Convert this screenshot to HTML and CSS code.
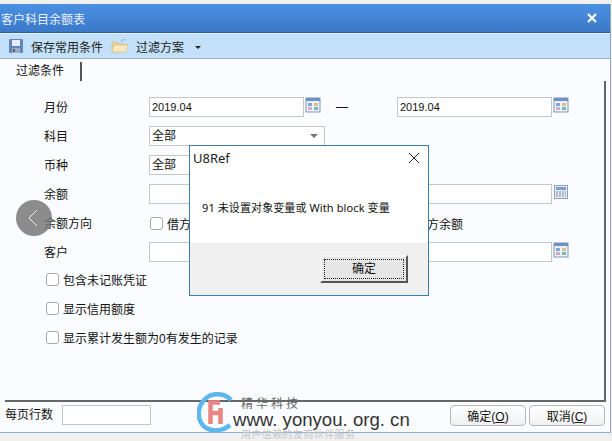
FILE: index.html
```html
<!DOCTYPE html>
<html lang="zh-CN">
<head>
    <meta charset="UTF-8">
    <title>客户科目余额表</title>
    <link rel="stylesheet" href="styles.css">
</head>
<body>
    <div class="window">
        <div class="titlebar">
            <span>客户科目余额表</span>
            <svg class="close-x" width="10" height="10" viewBox="0 0 10 10"><path d="M1 1 9 9M9 1 1 9" stroke="#fff" stroke-width="2.2"/></svg>
        </div>
        <div class="toolbar">
            <svg class="tool-icon" width="16" height="16" viewBox="0 0 16 16">
                <rect x="1" y="1" width="14" height="14" rx="1" fill="#6483bb"/>
                <rect x="4" y="2" width="8" height="6" fill="#e6edf8"/>
                <rect x="4" y="10" width="8" height="5" fill="#a3adc0"/>
                <rect x="5" y="11" width="2" height="3" fill="#4a5c84"/>
            </svg>
            <span class="tool-text">保存常用条件</span>
            <svg class="tool-icon folder" width="18" height="16" viewBox="0 0 18 16">
                <path d="M1 4h5l1 2h8v8H1z" fill="#e8d49a" stroke="#cdb680" stroke-width=".6"/>
                <path d="M3 7h14l-2 7H1z" fill="#f6e8bd" stroke="#d6be88" stroke-width=".6"/>
                <path d="M10 4c1-2 3-3 5-2" stroke="#a9bedb" stroke-width="1.4" fill="none"/>
            </svg>
            <span class="tool-text">过滤方案</span>
            <span class="caret"></span>
        </div>
        <div class="tab-strip">
            <span class="tab">过滤条件</span>
        </div>

        <div class="page">
            <div class="row">
                <label>月份</label>
                <div class="field date">2019.04</div>
                <svg class="cal" width="16" height="16" viewBox="0 0 16 16"><use href="#cal-icon"/></svg>
                <span class="dash">—</span>
                <div class="field date">2019.04</div>
                <svg class="cal" width="16" height="16" viewBox="0 0 16 16"><use href="#cal-icon"/></svg>
            </div>
            <div class="row">
                <label>科目</label>
                <div class="field field-select">全部<span class="select-arrow"></span></div>
            </div>
            <div class="row">
                <label>币种</label>
                <div class="field field-select">全部</div>
            </div>
            <div class="row">
                <label>余额</label>
                <div class="field"></div>
                <span class="cal-gap"></span>
                <span class="dash"></span>
                <div class="field"></div>
                <svg class="cal" width="16" height="16" viewBox="0 0 16 16">
                    <rect x="1.5" y="1.5" width="13" height="13" fill="#e4ebf3" stroke="#8fa3bd"/>
                    <rect x="3" y="3" width="10" height="3" fill="#7f9fd0"/>
                    <path d="M3 8h10M3 10h10M3 12h10" stroke="#7c8ea6" stroke-dasharray="2 1"/>
                </svg>
            </div>
            <div class="row">
                <label>余额方向</label>
                <div class="direction">
                    <span class="check"></span><span class="check-text">借方余额</span>
                </div>
                <span class="cal-gap"></span>
                <span class="dash"></span>
                <div class="direction">
                    <span class="check"></span><span class="check-text">贷方余额</span>
                </div>
            </div>
            <div class="row">
                <label>客户</label>
                <div class="field"></div>
                <span class="cal-gap"></span>
                <span class="dash"></span>
                <div class="field"></div>
                <svg class="cal" width="16" height="16" viewBox="0 0 16 16"><use href="#cal-icon"/></svg>
            </div>
            <div class="checks">
                <div class="check-row"><span class="check"></span>包含未记账凭证</div>
                <div class="check-row"><span class="check"></span>显示信用额度</div>
                <div class="check-row"><span class="check"></span>显示累计发生额为0有发生的记录</div>
            </div>
        </div>

        <div class="footer">
            <span class="page-label">每页行数</span>
            <div class="page-input"></div>
            <button class="btn btn-ok">确定(<u>O</u>)</button>
            <button class="btn">取消(<u>C</u>)</button>
        </div>
    </div>

    <div class="back-circle">
        <svg width="10" height="18" viewBox="0 0 10 18"><path d="M9 1 1 9l8 8" stroke="#f2f2f2" stroke-width="1" fill="none"/></svg>
    </div>

    <div class="dialog">
        <div class="dialog-title">
            <span>U8Ref</span>
            <svg width="12" height="12" viewBox="0 0 12 12"><path d="M1 1 11 11M11 1 1 11" stroke="#222" stroke-width="1"/></svg>
        </div>
        <div class="dialog-body">91 未设置对象变量或 With block 变量</div>
        <div class="dialog-foot">
            <button class="dialog-btn"><span>确定</span></button>
        </div>
    </div>

    <div class="watermark">
        <svg class="wm-logo" width="38" height="42" viewBox="0 0 38 42">
            <path d="M34 8C28 1 15 0 8 7-1 16 0 30 9 36c7 4 17 3 24-3" stroke="#5cb8ec" stroke-width="4.5" fill="none"/>
            <path d="M13.500 32V10.500H23M13.500 21H24" stroke="#e98683" stroke-width="4.500" fill="none"/>
            <path d="M23.500 16v16" stroke="#e98683" stroke-width="4.500" fill="none"/>
        </svg>
        <span class="wm-brand">精华科技</span>
        <span class="wm-url">www. yonyou. org. cn</span>
        <span class="wm-note">用户信赖的友商伙伴服务</span>
    </div>

    <svg width="0" height="0" class="defs">
        <symbol id="cal-icon" viewBox="0 0 16 16">
            <rect x="1" y="1" width="14" height="14" fill="#edf2f8" stroke="#7d97bd"/>
            <rect x="1" y="1" width="14" height="3" fill="#6f90c4"/>
            <rect x="3" y="6" width="4" height="3" fill="#7fa6d8"/>
            <rect x="9" y="6" width="4" height="3" fill="#d8c08a"/>
            <rect x="3" y="10" width="4" height="3" fill="#d2a9c8"/>
            <rect x="9" y="10" width="4" height="3" fill="#78b9a8"/>
        </symbol>
    </svg>
</body>
</html>
```

FILE: styles.css
```css
* {
    box-sizing: border-box;
}
html, body {
    margin: 0;
    height: 441px;
    overflow: hidden;
}
body {
    position: relative;
    width: 612px;
    background: #f0f0f0;
    font-family: "Liberation Sans", "Noto Sans CJK SC", sans-serif;
    font-size: 12px;
    color: #111;
}
.defs {
    position: absolute;
}
.window {
    margin-top: 4px;
    width: 611px;
    height: 429px;
    background: #fbfcff;
    border-right: 1px solid #9aa7b5;
    border-bottom: 1px solid #8fb0d0;
    display: flex;
    flex-direction: column;
}
.titlebar {
    height: 29px;
    flex: none;
    background: linear-gradient(#4b90e2, #3b78c8);
    border-bottom: 1px solid #2f5f9c;
    color: #e8f1fb;
    display: flex;
    align-items: center;
    justify-content: space-between;
    padding: 0 13px 0 1px;
}
.toolbar {
    height: 26px;
    flex: none;
    background: #c3e1fa;
    border-top: 1px solid #e6f3fd;
    border-bottom: 1px solid #9fb4c6;
    display: flex;
    align-items: center;
    padding-left: 8px;
}
.tool-text {
    margin-left: 7px;
    color: #222;
}
.folder {
    margin-left: 8px;
}
.caret {
    margin-left: 11px;
    margin-top: 3px;
    border: 3px solid transparent;
    border-top: 3px solid #222;
    border-bottom: 0;
}
.tab-strip {
    height: 22px;
    flex: none;
    padding: 3px 0 0 16px;
    display: flex;
}
.tab {
    width: 66px;
    height: 19px;
    line-height: 19px;
    border-right: 2px solid #555;
}
.page {
    flex: 1;
    margin: 0 4px 0 5px;
    padding: 16px 0 0 39px;
    border-right: 2px solid #666;
    border-bottom: 2px solid #666;
}
.row {
    height: 29px;
    display: flex;
    align-items: flex-start;
}
.row label {
    width: 105px;
    line-height: 20px;
    padding-top: 1px;
    flex: none;
}
.field {
    width: 155px;
    height: 20px;
    flex: none;
    background: #fff;
    border: 1px solid #c4c8cc;
    line-height: 18px;
    padding-left: 2px;
}
.date {
    font-size: 11px;
}
.field-select {
    width: 176px;
    position: relative;
}
.select-arrow {
    position: absolute;
    right: 6px;
    top: 7px;
    border: 4px solid transparent;
    border-top: 4px solid #777;
    border-bottom: 0;
}
.cal {
    flex: none;
    margin-left: 1px;
}
.cal-gap {
    width: 17px;
    flex: none;
}
.dash {
    width: 76px;
    flex: none;
    line-height: 20px;
    padding-left: 15px;
}
.direction {
    width: 155px;
    flex: none;
    display: flex;
    align-items: center;
    height: 20px;
    padding-left: 1px;
}
.check {
    width: 13px;
    height: 13px;
    flex: none;
    background: #fff;
    border: 1px solid #a9a9a9;
    border-radius: 3px;
}
.check-text {
    margin-left: 4px;
}
.checks {
    margin-top: -6px;
}
.check-row {
    height: 29px;
    padding-left: 2px;
    display: flex;
    align-items: center;
    gap: 4px;
}
.footer {
    height: 30px;
    flex: none;
    margin: 0 5px;
    display: flex;
    align-items: flex-start;
    padding-top: 3px;
}
.page-label {
    line-height: 20px;
    width: 57px;
    flex: none;
}
.page-input {
    width: 89px;
    height: 20px;
    background: #fff;
    border: 1px solid #c2c4d2;
}
.btn {
    width: 76px;
    height: 21px;
    margin-left: 3px;
    padding: 0;
    background: linear-gradient(#fff, #f1f1f1);
    border: 1px solid #b4b8bc;
    border-radius: 4px;
    font: inherit;
    color: #111;
}
.btn-ok {
    margin-left: auto;
}
.back-circle {
    position: absolute;
    left: 16px;
    top: 200px;
    width: 36px;
    height: 36px;
    padding-right: 3px;
    border-radius: 50%;
    background: rgba(120, 120, 120, 0.85);
    display: flex;
    align-items: center;
    justify-content: center;
}
.dialog {
    position: absolute;
    left: 189px;
    top: 145px;
    width: 240px;
    height: 151px;
    background: #fff;
    border: 1px solid #3a7ea6;
    display: flex;
    flex-direction: column;
    font-family: "Noto Sans", "Noto Sans CJK SC", sans-serif;
}
.dialog-title {
    height: 24px;
    flex: none;
    display: flex;
    align-items: center;
    justify-content: space-between;
    padding: 0 8px 0 3px;
    font-size: 13px;
    color: #222;
}
.dialog-body {
    height: 73px;
    flex: none;
    padding: 30px 0 0 12px;
    font-size: 11px;
    line-height: 16px;
    letter-spacing: 0.1px;
}
.dialog-foot {
    flex: 1;
    background: #f0f0f0;
    display: flex;
    justify-content: flex-end;
    padding: 12px 20px 0 0;
}
.dialog-btn {
    width: 88px;
    height: 28px;
    flex: none;
    padding: 2px;
    background: #e6e6e6;
    border: 2px solid;
    border-color: #f4f4f4 #555 #555 #f4f4f4;
    font: inherit;
    font-size: 12px;
    color: #111;
}
.dialog-btn span {
    display: block;
    height: 100%;
    line-height: 18px;
    border: 1px dotted #222;
}
.watermark {
    position: absolute;
    left: 197px;
    top: 392px;
    width: 215px;
    height: 46px;
}
.wm-logo {
    position: absolute;
    left: 0;
    top: 0;
}
.wm-brand {
    position: absolute;
    left: 44px;
    top: 6px;
    font-size: 12px;
    line-height: 12px;
    letter-spacing: 3px;
    color: #666;
}
.wm-url {
    position: absolute;
    left: 36px;
    top: 20px;
    font-size: 18.6px;
    line-height: 16px;
    white-space: nowrap;
    color: #333;
}
.wm-note {
    position: absolute;
    left: 44px;
    top: 38px;
    font-size: 10px;
    line-height: 9px;
    letter-spacing: 0.4px;
    white-space: nowrap;
    color: #c4c4c4;
}
```
